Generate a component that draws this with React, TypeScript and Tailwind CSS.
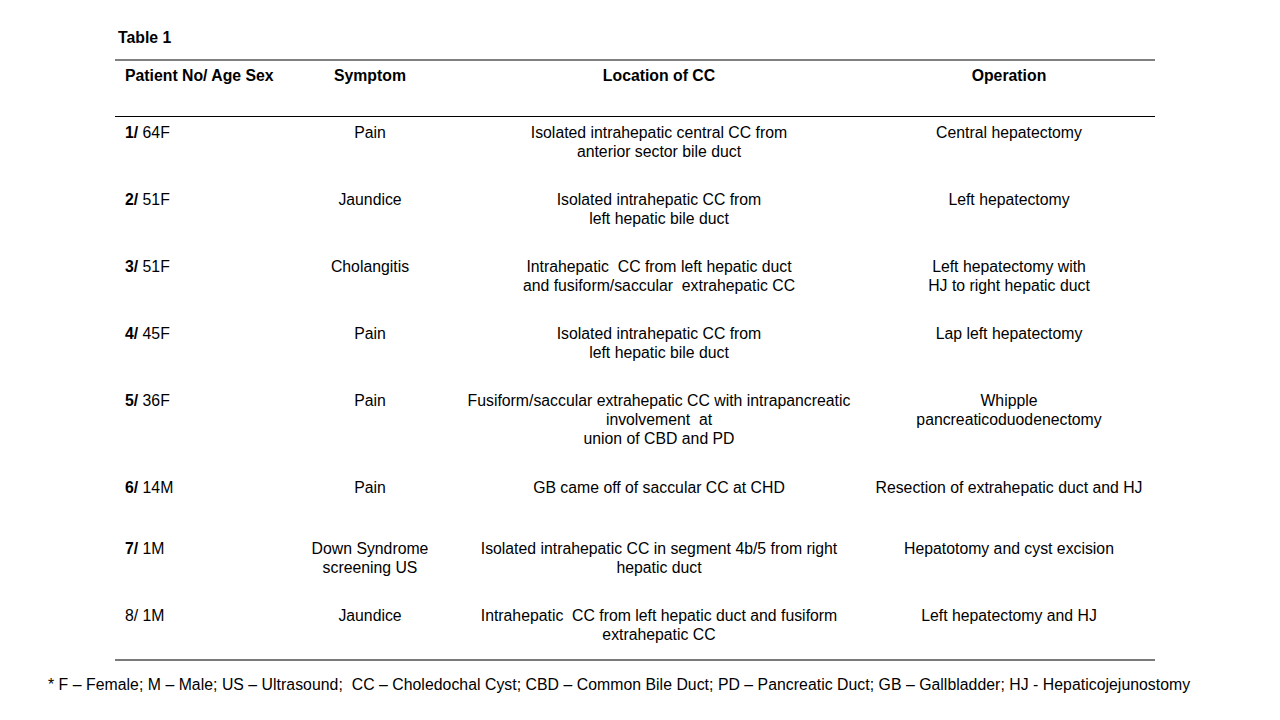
import React from 'react';

type Row = { no: string; age: string; bold: boolean; symptom: string[]; location: string[]; operation: string[]; h: string };

const rows: Row[] = [
    { no: '1/', age: ' 64F', bold: true, symptom: ['Pain'], location: ['Isolated intrahepatic central CC from', 'anterior sector bile duct'], operation: ['Central hepatectomy'], h: 'h-[67px]' },
    { no: '2/', age: ' 51F', bold: true, symptom: ['Jaundice'], location: ['Isolated intrahepatic CC from', 'left hepatic bile duct'], operation: ['Left hepatectomy'], h: 'h-[67px]' },
    { no: '3/', age: ' 51F', bold: true, symptom: ['Cholangitis'], location: ['Intrahepatic  CC from left hepatic duct', 'and fusiform/saccular  extrahepatic CC'], operation: ['Left hepatectomy with', 'HJ to right hepatic duct'], h: 'h-[67px]' },
    { no: '4/', age: ' 45F', bold: true, symptom: ['Pain'], location: ['Isolated intrahepatic CC from', 'left hepatic bile duct'], operation: ['Lap left hepatectomy'], h: 'h-[67px]' },
    { no: '5/', age: ' 36F', bold: true, symptom: ['Pain'], location: ['Fusiform/saccular extrahepatic CC with intrapancreatic', 'involvement  at', 'union of CBD and PD'], operation: ['Whipple', 'pancreaticoduodenectomy'], h: 'h-[87px]' },
    { no: '6/', age: ' 14M', bold: true, symptom: ['Pain'], location: ['GB came off of saccular CC at CHD'], operation: ['Resection of extrahepatic duct and HJ'], h: 'h-[61px]' },
    { no: '7/', age: ' 1M', bold: true, symptom: ['Down Syndrome', 'screening US'], location: ['Isolated intrahepatic CC in segment 4b/5 from right', 'hepatic duct'], operation: ['Hepatotomy and cyst excision'], h: 'h-[67px]' },
    { no: '8/', age: ' 1M', bold: false, symptom: ['Jaundice'], location: ['Intrahepatic  CC from left hepatic duct and fusiform', 'extrahepatic CC'], operation: ['Left hepatectomy and HJ'], h: 'h-[59px]' },
];

const Lines = ({ lines }: { lines: string[] }) => (
    <>
        {lines.map((l, i) => (
            <div key={i} className="whitespace-pre">{l}</div>
        ))}
    </>
);

const App = () => {
    return (
        <div className="w-[1280px] h-[720px] bg-white text-black overflow-hidden font-['Liberation_Sans',Arial,sans-serif] text-[15.8px] leading-[19px]">
            <div className="pt-[28px] pl-[118px] font-bold h-[59px]">Table 1</div>
            <div className="ml-[115px] w-[1040px]">
                <div className="border-t-2 border-[#808080] border-b border-b-black h-[58px] grid grid-cols-[170px_170px_408px_292px] font-bold pt-[5px]">
                    <div className="pl-[10px]">Patient No/ Age Sex</div>
                    <div className="text-center">Symptom</div>
                    <div className="text-center">Location of CC</div>
                    <div className="text-center">Operation</div>
                </div>
                {rows.map((r) => (
                    <div key={r.no} className={`grid grid-cols-[170px_170px_408px_292px] pt-[6px] ${r.h}`}>
                        <div className="pl-[10px] whitespace-pre">
                            <span className={r.bold ? 'font-bold' : ''}>{r.no}</span>{r.age}
                        </div>
                        <div className="text-center"><Lines lines={r.symptom} /></div>
                        <div className="text-center"><Lines lines={r.location} /></div>
                        <div className="text-center"><Lines lines={r.operation} /></div>
                    </div>
                ))}
                <div className="border-t-2 border-[#7a7a7a]" />
            </div>
            <div className="pl-[48px] pt-[14px] tracking-[0.04px] whitespace-pre">
                * F – Female; M – Male; US – Ultrasound;  CC – Choledochal Cyst; CBD – Common Bile Duct; PD – Pancreatic Duct; GB – Gallbladder; HJ - Hepaticojejunostomy
            </div>
        </div>
    );
};

export default App;
